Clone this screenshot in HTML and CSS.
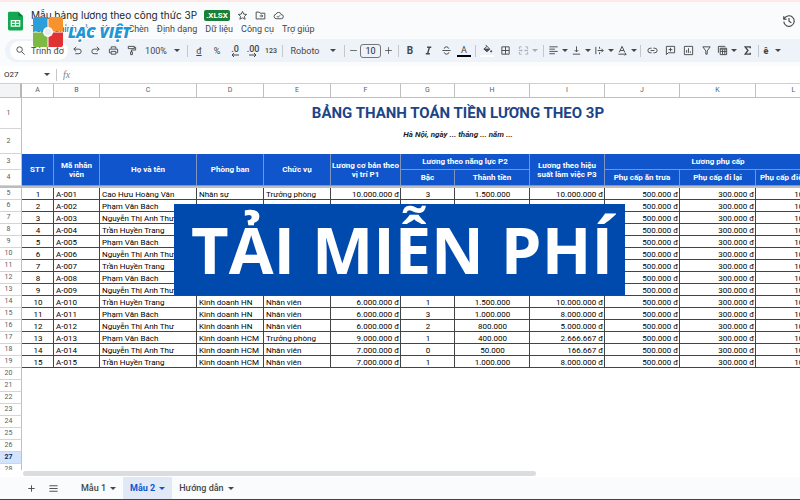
FILE: index.html
```
<!DOCTYPE html>
<html lang="vi">
<head>
    <meta charset="UTF-8">
    <meta name="viewport" content="width=device-width, initial-scale=1.0">
    <title>Mẫu bảng lương theo công thức 3P</title>
    <link rel="stylesheet" href="styles.css">
</head>

<body>
    <header class="top">
        <svg class="sheets-icon" viewBox="0 0 16 20">
            <path d="M1.500 0H11L16 5V18.500Q16 20 14.500 20H1.500Q0 20 0 18.500V1.500Q0 0 1.500 0Z" fill="#12a84f"/>
            <path d="M11 0L16 5H11Z" fill="#0b7d38"/>
            <path d="M3.500 9.500H12.500V15.500H3.500ZM3.500 12.500H12.500M8 9.500V15.500" fill="none" stroke="#fff" stroke-width="1.300"/>
        </svg>
        <div class="top-main">
            <div class="title-row">
                <h1>Mẫu bảng lương theo công thức 3P</h1>
                <span class="badge">.XLSX</span>
                <button aria-label="Gắn dấu sao"><svg class="icon" viewBox="0 0 24 24"><path d="M12 3l2.700 6 6.300.600-4.800 4.300 1.500 6.300L12 17l-5.700 3.200 1.500-6.300L3 9.600 9.300 9z"/></svg></button>
                <button aria-label="Di chuyển"><svg class="icon" viewBox="0 0 24 24"><path d="M2.500 4.500H9l2 2.500h10.500v12.500h-19zM10 13h6.500M14 10l3 3-3 3"/></svg></button>
                <button aria-label="Trạng thái"><svg class="icon" viewBox="0 0 24 24"><path d="M7 19a5 5 0 0 1-.500-9.900A6 6 0 0 1 18 10a4.500 4.500 0 0 1 0 9zM8.500 13.500l2.500 2.500 4.500-4.500"/></svg></button>
            </div>
            <nav class="menu">
                <button>Tệp</button>
                <button>Chỉnh sửa</button>
                <button>Xem</button>
                <button>Chèn</button>
                <button>Định dạng</button>
                <button>Dữ liệu</button>
                <button>Công cụ</button>
                <button>Trợ giúp</button>
            </nav>
        </div>
        <button class="history" aria-label="Lịch sử"><svg class="icon" viewBox="0 0 24 24"><path d="M3 4v5h5M3.500 9a9 9 0 1 1-.500 4M12 7v5.500l4 2.500"/></svg></button>
        <div class="brand">
            <svg viewBox="0 0 30 30">
                <path d="M2 0H14.500V14.500H0V2Q0 0 2 0Z" fill="#2c9fdb"/>
                <path d="M15.500 0H28Q30 0 30 2V14.500H15.500Z" fill="#f7932f"/>
                <path d="M0 15.500H14.500V30H2Q0 30 0 28Z" fill="#7cba43"/>
                <path d="M15.500 15.500H30V28Q30 30 28 30H15.500Z" fill="#e03232"/>
                <circle cx="15" cy="15" r="5" fill="#fff"/>
                <circle cx="15" cy="15" r="3.500" fill="#e9edf0"/>
            </svg>
            <span>LẠC VIỆT</span>
        </div>
    </header>

    <div class="toolbar">
        <label class="search">
            <svg class="icon" viewBox="0 0 24 24"><circle cx="10" cy="10" r="6"/><path d="M14.500 14.500L21 21"/></svg>
            <input type="text" value="Trình đơn" aria-label="Trình đơn">
        </label>
        <button aria-label="Hoàn tác"><svg class="icon" viewBox="0 0 24 24"><path d="M9 4L4 9l5 5M4 9h11a5 5 0 0 1 0 10H7"/></svg></button>
        <button aria-label="Làm lại"><svg class="icon" viewBox="0 0 24 24"><path d="M15 4l5 5-5 5M20 9H9a5 5 0 0 0 0 10h8"/></svg></button>
        <button aria-label="In"><svg class="icon" viewBox="0 0 24 24"><path d="M7 8V4h10v4M6 17H3V9h18v8h-3M7 14h10v6H7z"/></svg></button>
        <button aria-label="Sao chép định dạng"><svg class="icon" viewBox="0 0 24 24"><path d="M5 3h13v5H5zM18 5h3v6h-9v4M10 15h4v6h-4z"/></svg></button>
        <button class="zoom">100%<i class="caret"></i></button>
        <span class="sep"></span>
        <button class="txt"><u>đ</u></button>
        <button class="txt">%</button>
        <button class="txt dec">.0<svg viewBox="0 0 8 4"><path d="M8 2H1M3 0L1 2L3 4"/></svg></button>
        <button class="txt dec">.00<svg viewBox="0 0 8 4"><path d="M0 2H7M5 0L7 2L5 4"/></svg></button>
        <button class="num">123</button>
        <span class="sep"></span>
        <button class="font">Roboto<i class="caret"></i></button>
        <span class="sep"></span>
        <button class="minus" aria-label="Giảm cỡ chữ"><svg class="icon" viewBox="0 0 24 24"><path d="M3 12h18"/></svg></button>
        <input class="size" type="text" value="10" aria-label="Cỡ chữ">
        <button class="plus" aria-label="Tăng cỡ chữ"><svg class="icon" viewBox="0 0 24 24"><path d="M3 12h18M12 3v18"/></svg></button>
        <span class="sep"></span>
        <button class="bold">B</button>
        <button aria-label="In nghiêng"><svg class="icon thick" viewBox="0 0 24 24"><path d="M9 5h9M6 19h9M14 5l-4 14"/></svg></button>
        <button aria-label="Gạch ngang"><svg class="icon" viewBox="0 0 24 24"><path d="M3 12h18M17 8q-1-4-5-4-5 0-5 4M7 16q1 4 5 4 5 0 5-4"/></svg></button>
        <button class="color">A</button>
        <span class="sep"></span>
        <button class="fill" aria-label="Màu nền"><svg class="icon" viewBox="0 0 24 24"><path d="M8 2l9 9-6 6-7-6 7-6"/><path d="M5 11h11l-5 5zM20 14l1.500 3h-3z" fill="#444746"/></svg></button>
        <button aria-label="Đường viền"><svg class="icon" viewBox="0 0 24 24"><path d="M4 4h16v16H4zM4 12h16M12 4v16"/></svg></button>
        <button class="drop merge" aria-label="Hợp nhất"><svg class="icon" viewBox="0 0 24 24"><path d="M8 4H3v5M16 4h5v5M8 20H3v-5M16 20h5v-5M2 12h7M15 12h7M7 10l2 2-2 2M17 10l-2 2 2 2"/></svg><i class="caret"></i></button>
        <span class="sep"></span>
        <button class="drop" aria-label="Căn ngang"><svg class="icon" viewBox="0 0 24 24"><path d="M3 4h18M3 9h12M3 14h18M3 19h12"/></svg><i class="caret"></i></button>
        <button class="drop" aria-label="Căn dọc"><svg class="icon" viewBox="0 0 24 24"><path d="M12 3v12M8 11l4 4 4-4M4 20h16"/></svg><i class="caret"></i></button>
        <button class="drop" aria-label="Xuống dòng"><svg class="icon" viewBox="0 0 24 24"><path d="M4 4v16M12 4v4M12 16v4M8 12h12M16 8l4 4-4 4"/></svg><i class="caret"></i></button>
        <button class="drop" aria-label="Xoay chữ"><svg class="icon" viewBox="0 0 24 24"><path d="M5 16l6-13 6 13M7 12h8M3 20h17M17 17l3 3-3 3"/></svg><i class="caret"></i></button>
        <span class="sep"></span>
        <button aria-label="Chèn liên kết"><svg class="icon" viewBox="0 0 24 24"><path d="M10 7H7a5 5 0 0 0 0 10h3M14 7h3a5 5 0 0 1 0 10h-3M8 12h8"/></svg></button>
        <button aria-label="Nhận xét"><svg class="icon" viewBox="0 0 24 24"><path d="M3 21V3h18v14H7zM12 6v8M8 10h8"/></svg></button>
        <button aria-label="Biểu đồ"><svg class="icon" viewBox="0 0 24 24"><path d="M3 3h18v18H3zM8 11v6M12 7v10M16 14v3"/></svg></button>
        <button aria-label="Bộ lọc"><svg class="icon" viewBox="0 0 24 24"><path d="M4 4h16l-6.500 9v7h-3v-7z"/></svg></button>
        <button class="drop" aria-label="Bảng"><svg class="icon" viewBox="0 0 24 24"><path d="M3 17V3h15M7 7h14v14H7zM7 9h14M7 14h14M12 10v11M17 10v11"/></svg><i class="caret"></i></button>
        <button aria-label="Hàm"><svg class="icon thick" viewBox="0 0 24 24"><path d="M18 7V4H7l6 8-6 8h11v-3"/></svg></button>
        <span class="sep"></span>
        <button class="drop input-tool">ê<i class="caret"></i></button>
    </div>

    <div class="formula">
        <span class="cell-name">O27</span>
        <i class="caret"></i>
        <span class="sep"></span>
        <span class="fx">fx</span>
    </div>

    <main class="grid">
        <table>
            <colgroup>
                <col class="w-head"><col class="w-a"><col class="w-b"><col class="w-c"><col class="w-d"><col class="w-d"><col class="w-f"><col class="w-g"><col class="w-h"><col class="w-h"><col class="w-h"><col class="w-k"><col class="w-k"><col class="w-m">
            </colgroup>
            <thead>
                <tr class="letters"><th></th><th>A</th><th>B</th><th>C</th><th>D</th><th>E</th><th>F</th><th>G</th><th>H</th><th>I</th><th>J</th><th>K</th><th>L</th><th>M</th></tr>
            </thead>
            <tbody id="rows">
                <tr class="r1"><th>1</th><td colspan="13" class="sheet-title">BẢNG THANH TOÁN TIỀN LƯƠNG THEO 3P</td></tr>
                <tr class="r2"><th>2</th><td colspan="13" class="sheet-date">Hà Nội, ngày ... tháng ... năm ...</td></tr>
                <tr class="blue">
                    <th>3</th>
                    <td rowspan="2">STT</td>
                    <td rowspan="2">Mã nhân viên</td>
                    <td rowspan="2">Họ và tên</td>
                    <td rowspan="2">Phòng ban</td>
                    <td rowspan="2">Chức vụ</td>
                    <td rowspan="2">Lương cơ bản theo vị trí P1</td>
                    <td colspan="2">Lương theo năng lực P2</td>
                    <td rowspan="2">Lương theo hiệu suất làm việc P3</td>
                    <td colspan="3">Lương phụ cấp</td>
                    <td rowspan="2"></td>
                </tr>
                <tr class="blue"><th>4</th><td>Bậc</td><td>Thành tiền</td><td>Phụ cấp ăn trưa</td><td>Phụ cấp đi lại</td><td>Phụ cấp điện thoại</td></tr>
                <tr class="freeze"><th></th><td colspan="13"></td></tr>
            </tbody>
        </table>
        <div class="banner">TẢI MIỄN PHÍ</div>
    </main>

    <div class="scroll"><div class="thumb"></div></div>

    <footer class="tabs">
        <button class="tab-icon" aria-label="Thêm trang tính"><svg class="icon" viewBox="0 0 24 24"><path d="M5 12h14M12 5v14"/></svg></button>
        <button class="tab-icon" aria-label="Tất cả trang tính"><svg class="icon" viewBox="0 0 24 24"><path d="M3 6h18M3 12h18M3 18h18"/></svg></button>
        <button class="tab first">Mẫu 1<i class="caret"></i></button>
        <button class="tab active">Mẫu 2<i class="caret"></i></button>
        <button class="tab">Hướng dẫn<i class="caret"></i></button>
    </footer>

    <script src="script.js"></script>
</body>
</html>
```
FILE: styles.css
```
* {
    box-sizing: border-box;
}

body {
    margin: 0;
    height: 100vh;
    display: flex;
    flex-direction: column;
    overflow: hidden;
    font-family: Roboto, Arial, sans-serif;
    font-size: 9px;
    color: #1f1f1f;
    background-color: #f9fbfd;
    border-top: 2px solid #fdeae7;
    border-bottom: 1px solid #4a4340;
}

button {
    border: none;
    background: none;
    padding: 0;
    margin: 0;
    font: inherit;
    color: #444746;
    display: flex;
    align-items: center;
    justify-content: center;
}

.icon {
    width: 11px;
    height: 11px;
    flex: none;
    fill: none;
    stroke: #444746;
    stroke-width: 2;
}

.thick {
    stroke-width: 3;
}

.caret {
    border: 3px solid transparent;
    border-top: 3px solid #444746;
    border-bottom: none;
    flex: none;
}

/* title and menus */
.top {
    position: relative;
    display: flex;
    align-items: center;
    height: 37px;
    padding: 0 4px 0 8px;
    flex: none;
}

.sheets-icon {
    width: 15px;
    height: 20px;
    margin-right: 8px;
}

.top-main {
    flex: 1;
    padding-top: 2px;
}

.title-row {
    display: flex;
    align-items: center;
    gap: 7px;
    height: 14px;
}

h1 {
    margin: 0;
    font-family: Inter, Roboto, sans-serif;
    font-size: 10px;
    line-height: 14px;
    font-weight: 400;
}

.badge {
    background-color: #188038;
    color: white;
    font-size: 8px;
    font-weight: 700;
    line-height: 11px;
    padding: 0 2px;
    border-radius: 2px;
}

.menu {
    display: flex;
    gap: 8px;
    height: 13px;
}

.history .icon {
    width: 14px;
    height: 14px;
}

.brand {
    position: absolute;
    left: 33px;
    top: 15px;
    display: flex;
    align-items: center;
    gap: 5px;
    color: #2196d6;
    font-family: "Open Sans", sans-serif;
    font-size: 15px;
    line-height: 30px;
    font-weight: 800;
    font-style: italic;
    text-shadow: 1px 1px #fff, -1px -1px #fff, 1px -1px #fff, -1px 1px #fff;
}

.brand svg {
    width: 30px;
    height: 30px;
}

/* toolbar */
.toolbar {
    display: flex;
    align-items: center;
    flex: none;
    height: 23px;
    margin-left: 5px;
    padding-left: 5px;
    background-color: #eef2f9;
    border-radius: 12px 0 0 12px;
    overflow: hidden;
}

.toolbar button {
    width: 18px;
    height: 18px;
    flex: none;
}

.search {
    display: flex;
    align-items: center;
    gap: 5px;
    width: 58px;
    height: 19px;
    padding: 0 4px 0 5px;
    flex: none;
    background-color: white;
    border-radius: 10px;
}

.search input {
    width: 33px;
    border: none;
    padding: 0;
    font: inherit;
    color: #444746;
    background: none;
}

.sep {
    width: 1px;
    height: 12px;
    margin: 0 2px;
    flex: none;
    background-color: #c7c7c7;
}

.toolbar .zoom {
    width: 45px;
    gap: 7px;
}

.toolbar .font {
    width: 57px;
    gap: 11px;
}

.toolbar .minus {
    width: 13px;
}

.toolbar .plus {
    width: 15px;
}

.minus .icon,
.plus .icon {
    width: 9px;
}

.size {
    width: 21px;
    height: 14px;
    padding: 0;
    border: 1px solid #747775;
    border-radius: 3px;
    background: none;
    font: inherit;
    text-align: center;
    color: #1f1f1f;
}

.toolbar .num {
    font-size: 7px;
    font-weight: 500;
}

.toolbar .dec {
    flex-direction: column;
    line-height: 8px;
    font-weight: 500;
}

.dec svg {
    width: 8px;
    height: 4px;
    fill: none;
    stroke: #444746;
}

.toolbar .bold {
    font-size: 10px;
    font-weight: 700;
}

.toolbar .color {
    width: 14px;
    height: 13px;
    margin: 0 2px;
    line-height: 10px;
    border-bottom: 2px solid black;
}

.toolbar .fill {
    width: 14px;
    height: 13px;
    margin: 0 2px;
    border-bottom: 2px solid white;
}

.toolbar .drop {
    width: 23px;
    gap: 3px;
}

.toolbar .merge {
    width: 27px;
    opacity: 0.4;
}

.toolbar .input-tool {
    gap: 7px;
    font-weight: 900;
}

/* formula bar */
.formula {
    display: flex;
    align-items: center;
    flex: none;
    height: 17px;
    margin-top: 4px;
    padding-left: 4px;
    font-size: 8px;
    background-color: white;
}

.cell-name {
    width: 40px;
}

.formula .sep {
    margin: 0 6px;
}

.fx {
    font-family: "Liberation Serif", serif;
    font-size: 10px;
    font-style: italic;
    color: #80868b;
}

/* sheet */
.grid {
    position: relative;
    flex: 1;
    min-height: 0;
    overflow: hidden;
    background-color: white;
}

table {
    table-layout: fixed;
    width: 894px;
    border-collapse: separate;
    border-spacing: 0;
}

.w-head { width: 22px; }
.w-a { width: 32px; }
.w-b { width: 46px; }
.w-c { width: 97px; }
.w-d { width: 67px; }
.w-f { width: 70px; }
.w-g { width: 54px; }
.w-h { width: 75px; }
.w-k { width: 76px; }
.w-m { width: 62px; }

th,
td {
    height: 12px;
    padding: 0;
    line-height: 11px;
    white-space: nowrap;
    overflow: hidden;
}

th {
    font-size: 7px;
    font-weight: 400;
    color: #575b5f;
    border-right: 1px solid #c0c0c0;
    border-bottom: 1px solid #d5d5d5;
}

tbody th {
    padding-right: 4px;
    line-height: 9px;
}

.letters th {
    height: 15px;
    border-top: 1px solid #d0d0d0;
    border-bottom: 1px solid #c0c0c0;
}

.letters th:first-child {
    background-color: #f3f4f5;
    border-right: 2px solid #b7b7b7;
}

.r1 th {
    height: 31px;
}

.r2 th {
    height: 25px;
}

.sheet-title {
    font-size: 15px;
    font-weight: 700;
    text-align: center;
    color: #1c4587;
}

.sheet-date {
    font-size: 8px;
    font-weight: 700;
    font-style: italic;
    text-align: center;
    vertical-align: top;
}

.blue th,
.blue td {
    height: 16px;
}

.blue td {
    background-color: #1155cc;
    border-right: 1px solid #7f95bf;
    border-bottom: 1px solid #7f95bf;
    color: white;
    font-size: 8px;
    font-weight: 700;
    line-height: 9px;
    text-align: center;
    white-space: normal;
}

.freeze th,
.freeze td {
    height: 2px;
    line-height: 0;
    background-color: #bdbdbd;
    border: none;
}

.data td {
    padding: 2px 1px 0 2px;
    font-size: 8px;
    line-height: 9px;
    color: #000;
    border-right: 1px solid #444;
    border-bottom: 1px solid #444;
}

.data .center {
    text-align: center;
}

.data .right {
    text-align: right;
}

.selected th {
    background-color: #d3e3fd;
    color: #0b2a5c;
    font-weight: 700;
}

.banner {
    position: absolute;
    left: 174px;
    top: 121px;
    padding: 0 12px 0 17px;
    background-color: #004aad;
    color: white;
    font-family: "Open Sans", sans-serif;
    font-size: 65px;
    line-height: 91px;
    font-weight: 700;
    white-space: nowrap;
}

/* bottom */
.scroll {
    flex: none;
    height: 7px;
    padding: 1px 0 1px 23px;
    background-color: white;
}

.thumb {
    width: 66%;
    height: 5px;
    border-radius: 3px;
    background-color: #dadce0;
}

.tabs {
    display: flex;
    align-items: stretch;
    flex: none;
    height: 22px;
    padding-left: 20px;
}

.tab-icon {
    width: 22px;
}

.tab {
    gap: 4px;
    padding: 0 7px;
    font-weight: 500;
}

.first {
    margin-left: 10px;
}

.active {
    background-color: #e1e9f7;
    color: #0b57d0;
    font-weight: 700;
}

.active .caret {
    border-top-color: #0b57d0;
}
```
FILE: script.js
```
const names = ["Cao Hưu Hoàng Vân", "Phạm Văn Bách", "Nguyễn Thị Anh Thư", "Trần Huyền Trang"];

// department, position, base pay, grade, amount, P3 pay
const staff = [
    [0, "Nhân sự", "Trưởng phòng", "10.000.000", "3", "1.500.000", "10.000.000"],
    [1, "Nhân sự", "Nhân viên", "5.000.000", "2", "1.000.000", "8.000.000"],
    [2, "Nhân sự", "Nhân viên", "5.000.000", "1", "800.000", "5.000.000"],
    [3, "Kế toán", "Trưởng phòng", "9.000.000", "3", "1.500.000", "8.000.000"],
    [1, "Kế toán", "Nhân viên", "6.000.000", "2", "1.000.000", "5.000.000"],
    [2, "Kế toán", "Nhân viên", "6.000.000", "1", "800.000", "5.000.000"],
    [3, "Kinh doanh HN", "Trưởng phòng", "9.000.000", "3", "1.500.000", "8.000.000"],
    [1, "Kinh doanh HN", "Nhân viên", "6.000.000", "2", "1.000.000", "8.000.000"],
    [2, "Kinh doanh HN", "Nhân viên", "6.000.000", "1", "800.000", "5.000.000"],
    [3, "Kinh doanh HN", "Nhân viên", "6.000.000", "1", "1.500.000", "10.000.000"],
    [1, "Kinh doanh HN", "Nhân viên", "6.000.000", "3", "1.000.000", "8.000.000"],
    [2, "Kinh doanh HN", "Nhân viên", "6.000.000", "2", "800.000", "5.000.000"],
    [1, "Kinh doanh HCM", "Trưởng phòng", "9.000.000", "1", "400.000", "2.666.667"],
    [2, "Kinh doanh HCM", "Nhân viên", "7.000.000", "0", "50.000", "166.667"],
    [3, "Kinh doanh HCM", "Nhân viên", "7.000.000", "1", "1.000.000", "8.000.000"]
];

const body = document.getElementById("rows");
let html = "";

staff.forEach((s, i) => {
    const code = "A-" + String(i + 1).padStart(3, "0");
    html += `<tr class="data"><th>${i + 5}</th>
        <td class="center">${i + 1}</td><td>${code}</td><td>${names[s[0]]}</td><td>${s[1]}</td><td>${s[2]}</td>
        <td class="right">${s[3]} đ</td><td class="center">${s[4]}</td><td class="center">${s[5]}</td>
        <td class="right">${s[6]} đ</td><td class="right">500.000 đ</td><td class="right">300.000 đ</td><td class="right">100.000 đ</td><td></td></tr>`;
});

// empty rows under the table
for (let n = 20; n <= 28; n++) {
    html += `<tr${n === 27 ? ' class="selected"' : ''}><th>${n}</th><td colspan="13"></td></tr>`;
}

body.insertAdjacentHTML("beforeend", html);
```
